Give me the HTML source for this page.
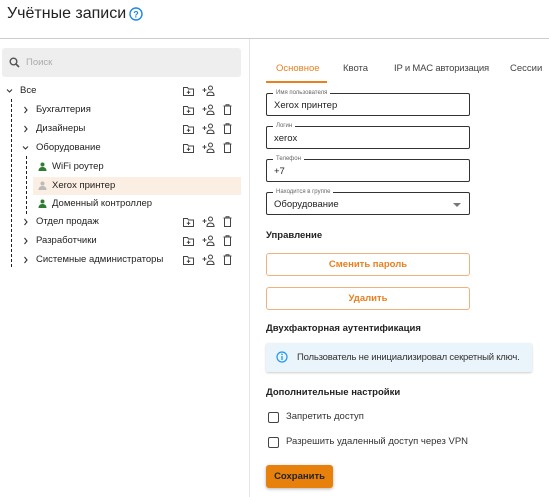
<!DOCTYPE html><html><head><meta charset="utf-8"><style>
*{box-sizing:border-box;margin:0;padding:0}
body{width:549px;height:497px;background:#fff;font-family:"Liberation Sans",sans-serif;color:#222;position:relative;overflow:hidden;font-size:9.5px}
.a{position:absolute;white-space:nowrap}
.row{position:absolute;left:0;width:241px;height:18px;line-height:18px;font-size:9.5px}
.inp{position:absolute;left:266px;width:204px;height:23px;border:1px solid #333;border-radius:2px;font-size:9.5px;padding:6px 7px 0}
.lab{position:absolute;top:-5px;left:6px;background:#fff;font-size:6px;color:#666;padding:0 3px;line-height:8px}
.btn{position:absolute;left:266px;width:204px;height:23px;border:1px solid #f0b27a;border-radius:3px;color:#ea7f1e;font-weight:bold;text-align:center;line-height:21px;font-size:9.5px}
.h{position:absolute;left:266px;font-weight:bold;font-size:9.5px}
.cb{position:absolute;left:268px;width:11px;height:11px;border:1.5px solid #444;border-radius:2px}
</style></head><body>
<div class="a" style="left:7px;top:5px;font-size:16px">Учётные записи</div>
<svg class="a" style="left:129px;top:7px" width="14" height="14" viewBox="0 0 14 14"><circle cx="7" cy="7" r="6" fill="none" stroke="#1e88e5" stroke-width="1.4"/><text x="7" y="10.5" font-size="9" font-weight="bold" text-anchor="middle" fill="#1e88e5" font-family="Liberation Sans">?</text></svg>
<div class="a" style="left:0;top:38px;width:549px;height:1px;background:#ccc"></div>
<div class="a" style="left:249px;top:39px;width:1px;height:458px;background:#e6e6e6"></div>
<div class="a" style="left:2px;top:48px;width:239px;height:29px;background:#eee;border-radius:3px"></div>
<svg class="a" style="left:9px;top:57px" width="11" height="11" viewBox="0 0 11 11"><circle cx="4.5" cy="4.5" r="3.3" fill="none" stroke="#555" stroke-width="1.4"/><path d="M7 7l3 3" stroke="#555" stroke-width="1.6"/></svg>
<div class="a" style="left:26px;top:57px;color:#aaa">Поиск</div>
<div class="a" style="left:11px;top:99px;height:168px;border-left:1px dashed #222"></div>
<div class="a" style="left:26px;top:156px;height:58px;border-left:1px dashed #222"></div>
<div class="a" style="left:33px;top:177px;width:208px;height:18px;background:#fbeee3"></div>
<div id="tree"></div>
<script>
var rows=[[91,8,'Все','v',2],[110,24,'Бухгалтерия','>',3],[129,24,'Дизайнеры','>',3],[148,24,'Оборудование','v',3],[167,38,'WiFi роутер','u',0],[186,38,'Xerox принтер','g',0],[204,38,'Доменный контроллер','u',0],[222,24,'Отдел продаж','>',3],[241,24,'Разработчики','>',3],[260,24,'Системные администраторы','>',3]];
var h='';
rows.forEach(function(r){var y=r[0]-9,x=r[1];h+='<div class="row" style="top:'+y+'px">';
if(r[3]=='v')h+='<svg class="a" style="left:'+(x-2)+'px;top:6px" width="7" height="6"><path d="M1 1.5l2.5 2.5 2.5-2.5" fill="none" stroke="#333" stroke-width="1.1"/></svg>';
if(r[3]=='>')h+='<svg class="a" style="left:'+(x-1)+'px;top:5px" width="6" height="8"><path d="M1.5 1l2.5 3-2.5 3" fill="none" stroke="#333" stroke-width="1.1"/></svg>';
var tx=x+12;
if(r[3]=='u'||r[3]=='g'){var c=r[3]=='u'?'#2e7d32':'#bbb';h+='<svg class="a" style="left:'+(x)+'px;top:4px" width="9" height="9"><circle cx="4.5" cy="2.5" r="2" fill="'+c+'"/><path d="M0.5 9c0-3 2-4 4-4s4 1 4 4z" fill="'+c+'"/></svg>';tx=x+14;}
h+='<span class="a" style="left:'+tx+'px;top:0">'+r[2]+'</span>';
if(r[4]>=2){h+='<svg class="a" style="left:183px;top:4px" width="11" height="10"><path d="M0.5 1.5h4l1 1.5h5v6.5h-10z" fill="none" stroke="#444"/><path d="M5.5 4.5v3.5M3.8 6.2h3.5" stroke="#444"/></svg>';
h+='<svg class="a" style="left:202px;top:3px" width="13" height="11"><path d="M0.5 5h4M2.5 3v4" stroke="#444"/><circle cx="8.5" cy="3" r="2" fill="none" stroke="#444"/><path d="M5 10.5c0-3 2-3.5 3.5-3.5s3.5.5 3.5 3.5z" fill="none" stroke="#444"/></svg>';}
if(r[4]>=3)h+='<svg class="a" style="left:223px;top:3px" width="9" height="11"><path d="M0.5 2h8M3 2V0.8h3V2M1.5 2.5v8h6v-8" fill="none" stroke="#444"/></svg>';
h+='</div>';});
document.getElementById('tree').innerHTML=h;
</script>
<div class="a" style="left:276px;top:63px;color:#ea7f1e">Основное</div>
<div class="a" style="left:343px;top:63px;color:#444">Квота</div>
<div class="a" style="left:394px;top:63px;color:#444;letter-spacing:-0.2px">IP и MAC авторизация</div>
<div class="a" style="left:510px;top:63px;color:#444">Сессии</div>
<div class="a" style="left:266px;top:81px;width:61px;height:2px;background:#ea7f1e"></div>
<div class="inp" style="top:93px"><span class="lab">Имя пользователя</span>Xerox принтер</div>
<div class="inp" style="top:126px"><span class="lab">Логин</span>xerox</div>
<div class="inp" style="top:159px"><span class="lab">Телефон</span>+7</div>
<div class="inp" style="top:192px"><span class="lab">Находится в группе</span>Оборудование<svg class="a" style="right:8px;top:10px" width="8" height="4"><path d="M0 0h8L4 4z" fill="#777"/></svg></div>
<div class="h" style="top:230px">Управление</div>
<div class="btn" style="top:253px">Сменить пароль</div>
<div class="btn" style="top:287px">Удалить</div>
<div class="h" style="top:323px">Двухфакторная аутентификация</div>
<div class="a" style="left:266px;top:343px;width:266px;height:29px;background:#e9f5fb;border-radius:2px;box-shadow:0 1px 2px rgba(0,0,0,.2)"></div>
<svg class="a" style="left:276px;top:351px" width="12" height="12"><circle cx="6" cy="6" r="5" fill="none" stroke="#2196f3" stroke-width="1.2"/><path d="M6 5v4" stroke="#2196f3" stroke-width="1.3"/><circle cx="6" cy="3.3" r=".8" fill="#2196f3"/></svg>
<div class="a" style="left:297px;top:352px;color:#333;letter-spacing:-0.2px">Пользователь не инициализировал секретный ключ.</div>
<div class="h" style="top:387px">Дополнительные настройки</div>
<div class="cb" style="top:412px"></div><div class="a" style="left:286px;top:411px;color:#333">Запретить доступ</div>
<div class="cb" style="top:437px"></div><div class="a" style="left:286px;top:436px;color:#333">Разрешить удаленный доступ через VPN</div>
<div class="a" style="left:266px;top:465px;width:67px;height:23px;background:#e8800c;border-radius:3px;box-shadow:0 1px 3px rgba(0,0,0,.3);color:#222;font-weight:bold;text-align:center;line-height:23px">Сохранить</div>
</body></html>
